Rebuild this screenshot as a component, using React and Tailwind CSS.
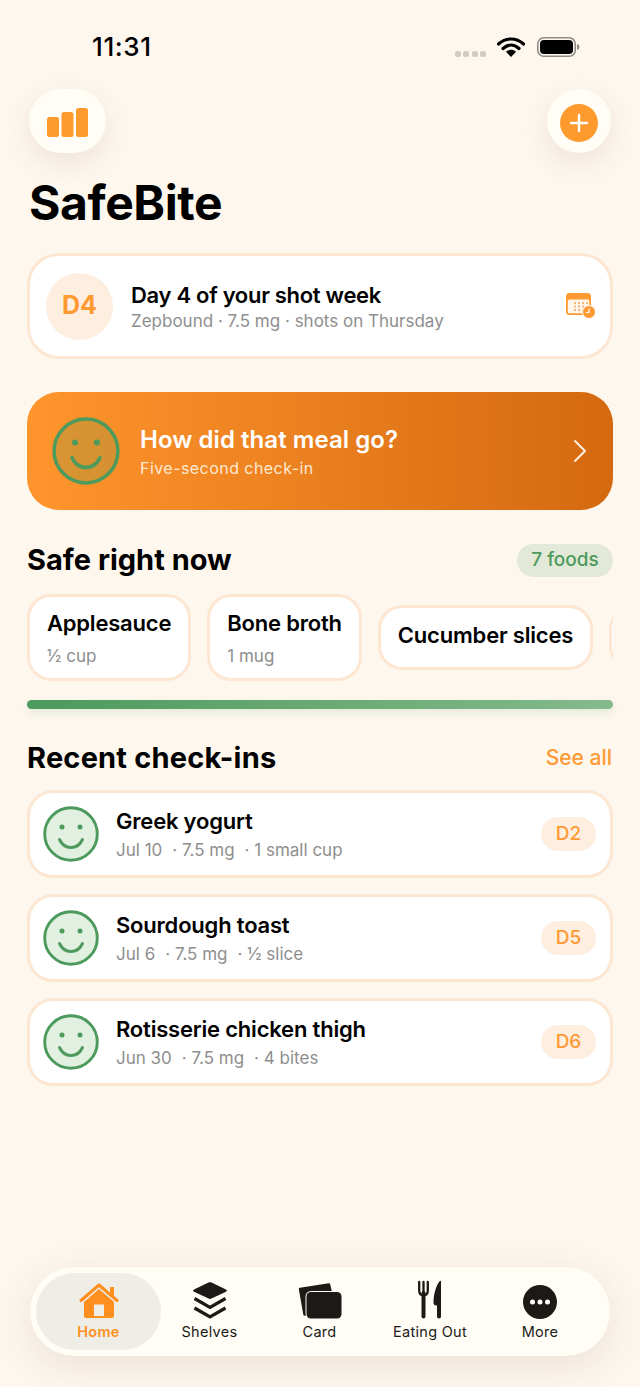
import React from "react";

const Smiley = ({ size = 56, fill = "#e2f0e2" }) => (
  <svg width={size} height={size} viewBox="0 0 56 56" className="shrink-0">
    <circle cx="28" cy="28" r="26.300" fill={fill} stroke="#4c9a5c" strokeWidth="2.900" />
    <circle cx="19" cy="21" r="2.500" fill="#4c9a5c" />
    <circle cx="37" cy="21" r="2.500" fill="#4c9a5c" />
    <path d="M16.500 33.500c2.300 5 6.300 8 11.500 8s9.200-3 11.500-8" fill="none" stroke="#4c9a5c" strokeWidth="3" strokeLinecap="round" />
  </svg>
);

const Chip = ({ name, sub }) => (
  <div className={`shrink-0 rounded-[24px] border-[3px] border-[#fde6d2] bg-white px-[17px] flex flex-col justify-center ${sub ? "pt-[1px]" : "pb-[6px]"}`}>
    <div className="text-[22px] leading-[28px] font-semibold text-black tracking-[-0.2px]">{name}</div>
    {sub && <div className="mt-[8px] text-[17px] leading-[22px] text-[#8e8e8e]">{sub}</div>}
  </div>
);

const Row = ({ name, date, dose, qty, day }) => (
  <div className="h-[88px] rounded-[26px] border-[3px] border-[#fde6d2] bg-white flex items-center pl-[13px] pr-[14px]">
    <Smiley size={56} />
    <div className="ml-[17px] flex-1">
      <div className="text-[22px] leading-[28px] font-semibold text-black tracking-[-0.2px]">{name}</div>
      <div className="mt-[4px] text-[17px] leading-[22px] text-[#8e8e8e] flex">
        <span>{date}</span><span className="ml-[10px]">· {dose}</span><span className="ml-[10px]">· {qty}</span>
      </div>
    </div>
    <div className="w-[55px] h-[34px] rounded-full bg-[#fdeee0] text-[#ff9a33] text-[19px] font-medium flex items-center justify-center">{day}</div>
  </div>
);

const Tab = ({ icon, label, active, w }) => (
  <div className={`flex flex-col items-center justify-end pb-[9px] h-[77px] rounded-full ${w} ${active ? "bg-[#eeede6] text-[#ff8f1f] font-semibold" : "text-[#1c1a17] font-normal"}`}>
    {icon}
    <div className="mt-[4px] text-[14.500px] leading-[18px] tracking-[0.3px]">{label}</div>
  </div>
);

const Home = () => (
  <svg width="40" height="36" viewBox="0 0 40 36">
    <path d="M31 4h4v10l-4-3.500z" fill="#ff8f1f" />
    <path d="M2 17.500 20 2l18 15.500" fill="none" stroke="#ff8f1f" strokeWidth="3" strokeLinecap="round" strokeLinejoin="round" />
    <path fillRule="evenodd" d="M5 19 20 6l15 13v14a2 2 0 0 1-2 2H7a2 2 0 0 1-2-2zM15 21.500v11.500h10V21.500z" fill="#ff8f1f" />
  </svg>
);
const Layers = () => (
  <svg width="36" height="37" viewBox="0 0 36 37">
    <path d="M16.500.600c1-.6 2-.6 3 0L34 7.500c1.200.7 1.200 1.600 0 2.300L19.500 16.500c-1 .6-2 .6-3 0L2 9.800C.8 9.100.8 8.200 2 7.500z" fill="#1c1a17" />
    <path d="M2.500 16.500 18 25.500 33.500 16.500M2.500 26 18 35 33.500 26" fill="none" stroke="#1c1a17" strokeWidth="3.200" />
  </svg>
);
const Cards = () => (
  <svg width="44" height="36" viewBox="0 0 44 36">
    <path d="M2 6 31 1.500 33 10H10V31.500H6.500z" fill="#1c1a17" stroke="#1c1a17" strokeWidth="2.400" strokeLinejoin="round" />
    <rect x="8.500" y="9" width="35" height="26.500" rx="4.500" fill="#1c1a17" stroke="#fffdf5" strokeWidth="2" paintOrder="stroke" />
  </svg>
);
const Fork = () => (
  <svg width="26" height="39" viewBox="0 0 26 39">
    <path d="M2.200 2v8.500c0 3 1.500 4.800 4.300 4.800s4.300-1.800 4.300-4.800V2M6.500 2v11" fill="none" stroke="#1c1a17" strokeWidth="2.300" strokeLinecap="round" />
    <path d="M6.500 13v23.500" fill="none" stroke="#1c1a17" strokeWidth="4" strokeLinecap="round" />
    <path d="M24 1.500V36.500a2 2 0 0 1-4 0V25.500h-1c-1.500 0-2.500-1-2.500-3C16.500 13 20 4 22.800 1c.5-.4 1.200-.2 1.200.5z" fill="#1c1a17" />
  </svg>
);
const More = () => (
  <svg width="34" height="34" viewBox="0 0 34 34">
    <circle cx="17" cy="17" r="17" fill="#1c1a17" />
    <circle cx="9.500" cy="17" r="2.500" fill="#fffdf5" />
    <circle cx="17" cy="17" r="2.500" fill="#fffdf5" />
    <circle cx="24.500" cy="17" r="2.500" fill="#fffdf5" />
  </svg>
);

export default function App() {
  return (
    <div className="w-[640px] h-[1387px] bg-[#fef7ee] overflow-hidden flex flex-col font-['Inter',sans-serif]">
      {/* status */}
      <div className="h-[89px] shrink-0 pt-[30px] pl-[92px] pr-[59px] flex items-start justify-between">
        <div className="text-[26px] leading-[34px] font-medium text-black tracking-[0.6px]">11:31</div>
        <div className="flex items-center pt-[7px]">
          <div className="flex gap-[2.500px] mt-[14px]">
            {[0, 1, 2, 3].map((i) => <div key={i} className="w-[6px] h-[6px] rounded-[2px] bg-[#cfcbc6]" />)}
          </div>
          <svg width="28" height="20" viewBox="0 0 28 20" className="ml-[11px]">
            <path d="M1.500 7C9 .3 19 .3 26.500 7" fill="none" stroke="#000" strokeWidth="3.200" strokeLinecap="round" />
            <path d="M6 11.500c5-4.500 11-4.500 16 0" fill="none" stroke="#000" strokeWidth="3.200" strokeLinecap="round" />
            <path d="M9 14.800c3-2.600 7-2.600 10 0L14 20z" fill="#000" />
          </svg>
          <svg width="44" height="20" viewBox="0 0 44 20" className="ml-[12px]">
            <rect x="0.800" y="0.800" width="37.400" height="18.400" rx="6" fill="none" stroke="#8f8c88" strokeWidth="1.600" />
            <rect x="3" y="3" width="33" height="14" rx="4" fill="#000" />
            <path d="M40 7c1.500 .3 2.500 1.500 2.500 3s-1 2.700-2.500 3z" fill="#8f8c88" />
          </svg>
        </div>
      </div>

      {/* top buttons */}
      <div className="shrink-0 px-[29px] flex items-center justify-between">
        <div className="w-[77px] h-[64px] rounded-full bg-[#fffdf5] shadow-[0_10px_28px_rgba(90,70,50,0.10)] flex items-center justify-center">
          <svg width="41" height="30" viewBox="0 0 41 30" fill="#ff9a2e" className="mt-[1px]">
            <rect x="0" y="10" width="12" height="20" rx="2.500" />
            <rect x="14.500" y="5" width="12" height="25" rx="2.500" />
            <rect x="29" y="1" width="12" height="29" rx="2.500" />
          </svg>
        </div>
        <div className="w-[64px] h-[64px] rounded-full bg-[#fffdf5] shadow-[0_10px_28px_rgba(90,70,50,0.10)] flex items-center justify-center">
          <svg width="38" height="38" viewBox="0 0 38 38" className="mt-[3px]">
            <circle cx="19" cy="19" r="19" fill="#ff9a2e" />
            <path d="M19 11v16M11 19h16" stroke="#fff" strokeWidth="2.400" strokeLinecap="round" />
          </svg>
        </div>
      </div>

      <h1 className="shrink-0 mt-[22px] pl-[29px] text-[48px] leading-[56px] font-bold text-black tracking-[-0.4px]">SafeBite</h1>

      <div className="shrink-0 px-[27px] mt-[22px]">
        {/* shot week */}
        <div className="h-[106px] rounded-[32px] border-[3px] border-[#fde6d2] bg-white flex items-center pl-[16px] pr-[14px]">
          <div className="w-[67px] h-[67px] rounded-full bg-[#fdeee0] flex items-center justify-center text-[25px] font-bold text-[#ff9a33]">D4</div>
          <div className="ml-[18px] flex-1 pt-[2px]">
            <div className="text-[22px] leading-[28px] font-semibold text-black tracking-[-0.3px]">Day 4 of your shot week</div>
            <div className="mt-[1px] text-[17px] leading-[23px] text-[#8e8e8e]">Zepbound · 7.5 mg · shots on Thursday</div>
          </div>
          <svg width="30" height="26" viewBox="0 0 30 26">
            <rect x="0" y="0" width="25" height="22" rx="3.500" fill="#ff9a33" />
            <rect x="1.800" y="6.500" width="21.400" height="13.800" rx="1.500" fill="#fff6ec" />
            {[9, 13, 17, 21].map((x) => [9.500, 13, 16.500].map((y) => <rect key={x + "-" + y} x={x - 1} y={y - 0.5} width="2" height="2" fill="#f8b77a" />))}
            <circle cx="23" cy="19" r="6.500" fill="#ff9a33" stroke="#fff" strokeWidth="1" />
            <path d="M23 15.500V19.500H20" fill="none" stroke="#fff" strokeWidth="1.200" />
          </svg>
        </div>

        {/* meal banner */}
        <div className="mt-[33px] h-[118px] rounded-[32px] bg-gradient-to-r from-[#ff952c] to-[#d4690f] flex items-center pl-[25px] pr-[26px]">
          <Smiley size={68} fill="rgba(76,154,92,0.2)" />
          <div className="ml-[20px] flex-1 pt-[1px]">
            <div className="text-[24px] leading-[30px] font-semibold text-white tracking-[0.05px]">How did that meal go?</div>
            <div className="mt-[2px] text-[16px] leading-[22px] text-[#ffe8d2] tracking-[0.45px]">Five-second check-in</div>
          </div>
          <svg width="14" height="24" viewBox="0 0 14 24" fill="none" stroke="#ffeedd" strokeWidth="2" strokeLinecap="round" strokeLinejoin="round">
            <path d="M2 2l10 10L2 22" />
          </svg>
        </div>

        {/* safe right now */}
        <div className="mt-[33px] h-[34px] flex items-center justify-between">
          <div className="text-[29px] leading-[34px] font-bold text-black">Safe right now</div>
          <div className="w-[96px] h-[33px] rounded-full bg-[#e3e9d8] text-[#4c9a5c] text-[19px] font-medium flex items-center justify-center">7 foods</div>
        </div>
        <div className="mt-[17px] h-[87px] flex items-center gap-[16px] overflow-hidden">
          <div className="shrink-0 h-[87px] flex"><Chip name="Applesauce" sub="½ cup" /></div>
          <div className="shrink-0 h-[87px] flex"><Chip name="Bone broth" sub="1 mug" /></div>
          <div className="shrink-0 h-[65px] flex"><Chip name="Cucumber slices" /></div>
          <div className="shrink-0 w-[120px] h-[65px] rounded-[24px] border-[3px] border-[#fde6d2] bg-white" />
        </div>
        <div className="mt-[19px] h-[9px] rounded-full bg-gradient-to-r from-[#4c9a5c] to-[#84ba8c] shadow-[0_4px_8px_rgba(76,154,92,0.15)]" />

        {/* recent */}
        <div className="mt-[32px] h-[34px] flex items-center justify-between">
          <div className="text-[29px] leading-[34px] font-bold text-black tracking-[0.2px]">Recent check-ins</div>
          <div className="text-[#ff9a33] text-[21px] font-medium mr-[1px]">See all</div>
        </div>
        <div className="mt-[15px] flex flex-col gap-[16px]">
          <Row name="Greek yogurt" date="Jul 10" dose="7.5 mg" qty="1 small cup" day="D2" />
          <Row name="Sourdough toast" date="Jul 6" dose="7.5 mg" qty="½ slice" day="D5" />
          <Row name="Rotisserie chicken thigh" date="Jun 30" dose="7.5 mg" qty="4 bites" day="D6" />
        </div>
      </div>

      {/* tab bar */}
      <div className="mt-auto mb-[31px] mx-[30px] h-[89px] rounded-full bg-[#fffdf5] shadow-[0_10px_40px_rgba(90,70,50,0.12)] flex items-center pl-[6px] shrink-0">
        <Tab active w="w-[125px]" label="Home" icon={<Home />} />
        <Tab w="w-[97px]" label="Shelves" icon={<Layers />} />
        <Tab w="w-[123px]" label="Card" icon={<Cards />} />
        <Tab w="w-[98px]" label="Eating Out" icon={<Fork />} />
        <Tab w="w-[122px]" label="More" icon={<More />} />
      </div>
    </div>
  );
}
